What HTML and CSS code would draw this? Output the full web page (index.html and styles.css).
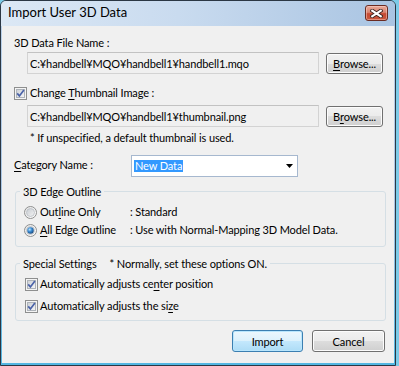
FILE: index.html
```html
<!DOCTYPE html>
<html>
<head>
<meta charset="utf-8">
<title>Import User 3D Data</title>
<link rel="stylesheet" href="styles.css">
</head>
<body>
<svg class="defs" width="0" height="0" aria-hidden="true">
  <defs>
    <linearGradient id="cbIn" x1="0" y1="0" x2="1" y2="1">
      <stop offset="0" stop-color="#cbcfd5"/>
      <stop offset="1" stop-color="#f7f7f7"/>
    </linearGradient>
    <linearGradient id="rbOut" x1="0" y1="0" x2="1" y2="1">
      <stop offset="0" stop-color="#e4e4e4"/>
      <stop offset="1" stop-color="#ffffff"/>
    </linearGradient>
    <linearGradient id="rbIn" x1="0" y1="0" x2="1" y2="1">
      <stop offset="0" stop-color="#c6cbd1"/>
      <stop offset="1" stop-color="#f4f4f4"/>
    </linearGradient>
    <radialGradient id="rbDot" cx="0.38" cy="0.35" r="0.7">
      <stop offset="0" stop-color="#bfe6fb"/>
      <stop offset="0.45" stop-color="#3d8ed5"/>
      <stop offset="1" stop-color="#16467c"/>
    </radialGradient>
  </defs>
</svg>
<div class="window">
  <div class="titlebar">
    <span class="title">Import User 3D Data</span>
    <div class="close">
      <svg width="13" height="9" viewBox="0 0 13 9">
        <path d="M2.2 1.6 L10.8 7.4 M10.8 1.6 L2.2 7.4" stroke="#3d2320" stroke-width="3.8" stroke-linecap="square" fill="none"/>
        <path d="M2.2 1.6 L10.8 7.4 M10.8 1.6 L2.2 7.4" stroke="#ffffff" stroke-width="2.1" stroke-linecap="square" fill="none"/>
      </svg>
    </div>
  </div>
  <div class="client">
    <div class="line lbl-file">3D Data File Name :</div>
    <div class="path-row">
      <div class="field">C:¥handbell¥MQO¥handbell1¥handbell1.mqo</div>
      <div class="btn browse"><u>B</u>rowse...</div>
    </div>
    <div class="line check-row thumb">
      <svg class="cb" width="13" height="13" viewBox="0 0 13 13">
        <rect x="0.5" y="0.5" width="12" height="12" fill="#f4f4f4" stroke="#8e8f8f"/>
        <rect x="2.5" y="2.5" width="8" height="8" fill="url(#cbIn)" stroke="#aeb3b9"/>
        <path d="M3.2 6.4 L5.4 8.9 L9.9 3" fill="none" stroke="#4a62a8" stroke-width="1.7"/>
      </svg>
      <span>Change <u>T</u>humbnail Image :</span>
    </div>
    <div class="path-row second">
      <div class="field">C:¥handbell¥MQO¥handbell1¥thumbnail.png</div>
      <div class="btn browse">B<u>r</u>owse...</div>
    </div>
    <div class="line note">* If unspecified, a default thumbnail is used.</div>
    <div class="cat-row">
      <span class="line cat-label"><u>C</u>ategory Name :</span>
      <div class="combo">
        <span class="sel">New Data</span>
        <svg class="arrow" width="7" height="4" viewBox="0 0 7 4"><path d="M0 0 H7 L3.5 4 Z" fill="#000"/></svg>
      </div>
    </div>
    <fieldset class="group edge">
      <legend class="line">3D Edge Outline</legend>
      <div class="radio-grid">
        <div class="line opt">
          <svg class="rb" width="13" height="13" viewBox="0 0 13 13">
            <circle cx="6.5" cy="6.5" r="6" fill="url(#rbOut)" stroke="#8e8f8f"/>
            <circle cx="6.5" cy="6.5" r="4" fill="url(#rbIn)" stroke="#b9bec4" stroke-width="0.8"/>
          </svg>
          <span>Out<u>l</u>ine Only</span>
        </div>
        <div class="line">: Standard</div>
        <div class="line opt">
          <svg class="rb" width="13" height="13" viewBox="0 0 13 13">
            <circle cx="6.5" cy="6.5" r="6" fill="url(#rbOut)" stroke="#8e8f8f"/>
            <circle cx="6.5" cy="6.5" r="4" fill="url(#rbIn)" stroke="#b9bec4" stroke-width="0.8"/>
            <circle cx="6.5" cy="6.5" r="3.2" fill="url(#rbDot)"/>
          </svg>
          <span><u>A</u>ll Edge Outline</span>
        </div>
        <div class="line">: Use with Normal-Mapping 3D Model Data.</div>
      </div>
    </fieldset>
    <fieldset class="group special">
      <legend class="line">Special Settings<span class="hint">* Normally, set these options ON.</span></legend>
      <div class="line check-row opt2">
        <svg class="cb" width="13" height="13" viewBox="0 0 13 13">
          <rect x="0.5" y="0.5" width="12" height="12" fill="#f4f4f4" stroke="#8e8f8f"/>
          <rect x="2.5" y="2.5" width="8" height="8" fill="url(#cbIn)" stroke="#aeb3b9"/>
          <path d="M3.2 6.4 L5.4 8.9 L9.9 3" fill="none" stroke="#4a62a8" stroke-width="1.7"/>
        </svg>
        <span>Automatically adjusts ce<u>n</u>ter position</span>
      </div>
      <div class="line check-row opt2 second-opt">
        <svg class="cb" width="13" height="13" viewBox="0 0 13 13">
          <rect x="0.5" y="0.5" width="12" height="12" fill="#f4f4f4" stroke="#8e8f8f"/>
          <rect x="2.5" y="2.5" width="8" height="8" fill="url(#cbIn)" stroke="#aeb3b9"/>
          <path d="M3.2 6.4 L5.4 8.9 L9.9 3" fill="none" stroke="#4a62a8" stroke-width="1.7"/>
        </svg>
        <span>Automatically adjusts the si<u>z</u>e</span>
      </div>
    </fieldset>
    <div class="actions">
      <div class="btn default import">Import</div>
      <div class="btn cancel">Cancel</div>
    </div>
  </div>
</div>
</body>
</html>
```

FILE: styles.css
```css
* { box-sizing: border-box; }
html, body { margin: 0; padding: 0; }
body {
  width: 399px;
  height: 366px;
  overflow: hidden;
  background: #7ccbe8;
  font-family: Lato, "Noto Sans", sans-serif;
  font-size: 11px;
  letter-spacing: -0.12px;
  line-height: 15px;
  color: #000;
}
.defs { display: block; width: 0; height: 0; overflow: hidden; }
u { text-decoration: underline; text-underline-offset: 2px; }

.window {
  width: 396px;
  height: 366px;
  border: 1px solid #2b3744;
  border-radius: 6px 6px 0 0;
  background: linear-gradient(to bottom, #bcd2ea 0%, #a9c6e4 55%, #52b6e2 100%);
  display: flex;
  flex-direction: column;
}
.titlebar {
  flex: none;
  height: 25px;
  display: flex;
  align-items: flex-start;
  padding-left: 7px;
  border-radius: 5px 5px 0 0;
  background: linear-gradient(to right, #dce8f5 0%, #c9dbef 45%, #a9c4e2 100%);
}
.title {
  margin-top: 3px;
  font-size: 13px;
  letter-spacing: 0;
  line-height: 17px;
  color: #000;
}
.close {
  margin-left: auto;
  margin-right: 7px;
  margin-top: 4px;
  width: 23px;
  height: 16px;
  border: 1px solid #6b2b22;
  border-radius: 3px;
  background: linear-gradient(to bottom, #e9a99a 0%, #d98470 45%, #c64a33 55%, #c9563c 100%);
  box-shadow: inset 0 0 0 1px rgba(255, 220, 210, 0.45);
  display: flex;
  align-items: center;
  justify-content: center;
}

.client {
  flex: 1;
  margin: 0 1px 2px 1px;
  background: #f0f0f0;
  padding: 9px 9px 0 12px;
}
.line { line-height: 15px; height: 15px; white-space: nowrap; }

.path-row {
  display: flex;
  align-items: flex-start;
  gap: 7px;
  margin-top: 2px;
  margin-left: 13px;
}
.path-row.second { margin-top: 5px; }
.field {
  width: 292px;
  height: 22px;
  border: 1px solid #d3d3d3;
  border-top-color: #c2c2c2;
  background: #f0f0f0;
  padding: 3px 2px;
  line-height: 15px;
  white-space: nowrap;
  overflow: hidden;
}
.btn {
  height: 22px;
  border: 1px solid #707070;
  border-radius: 3px;
  background: linear-gradient(to bottom, #f2f2f2 0%, #ebebeb 50%, #dddddd 50%, #cfcfcf 100%);
  box-shadow: inset 0 0 0 1px #fcfcfc;
  display: flex;
  align-items: center;
  justify-content: center;
  line-height: 15px;
  white-space: nowrap;
}
.browse {
  width: 57px;
  height: 21px;
  margin-top: 1px;
}

.check-row {
  display: flex;
  align-items: flex-start;
  gap: 3px;
}
.check-row .cb { margin-top: 2px; flex: none; }
.thumb { margin-top: 11px; }

.note { margin-top: 3px; margin-left: 16px; }

.cat-row {
  display: flex;
  align-items: flex-start;
  margin-top: 10px;
}
.cat-label { width: 117px; margin-top: 2px; }
.combo {
  width: 167px;
  height: 22px;
  border: 1px solid #a6b8cf;
  background: #fff;
  display: flex;
  align-items: flex-start;
  padding: 4px 4px 0 2px;
}
.sel {
  display: block;
  height: 12px;
  line-height: 11px;
  padding: 0 1px;
  background: #3399ff;
  color: #fff;
}
.arrow { margin-left: auto; margin-top: 4px; }

.group {
  margin: 0;
  border: 1px solid #d5dfe5;
  border-radius: 3px;
  min-width: 0;
  margin-left: 1px;
  margin-right: -1px;
}
.group legend {
  padding: 0 3px;
}
.edge { margin-top: 7px; padding: 5px 8px 9px 8px; }
.edge legend { margin-left: -4px; }
.radio-grid {
  display: grid;
  grid-template-columns: 106px 1fr;
  row-gap: 3px;
}
.opt { display: flex; align-items: flex-start; gap: 3px; }
.opt .rb { margin-top: 2px; flex: none; }

.special { margin-top: 9px; padding: 5px 8px 7px 9px; }
.special legend { margin-left: -5px; }
.hint { margin-left: 13px; }
.opt2 { gap: 2px; }
.second-opt { margin-top: 7px; }

.actions {
  display: flex;
  justify-content: flex-end;
  gap: 9px;
  margin-top: 9px;
}
.import { width: 71px; }
.cancel { width: 73px; }
.default {
  border-color: #3c7fb1;
  background: linear-gradient(to bottom, #ecf7fd 0%, #dcf1fc 50%, #c4e8fd 50%, #addcf6 100%);
  box-shadow: inset 0 0 0 1px #b9e6fd;
}
```
